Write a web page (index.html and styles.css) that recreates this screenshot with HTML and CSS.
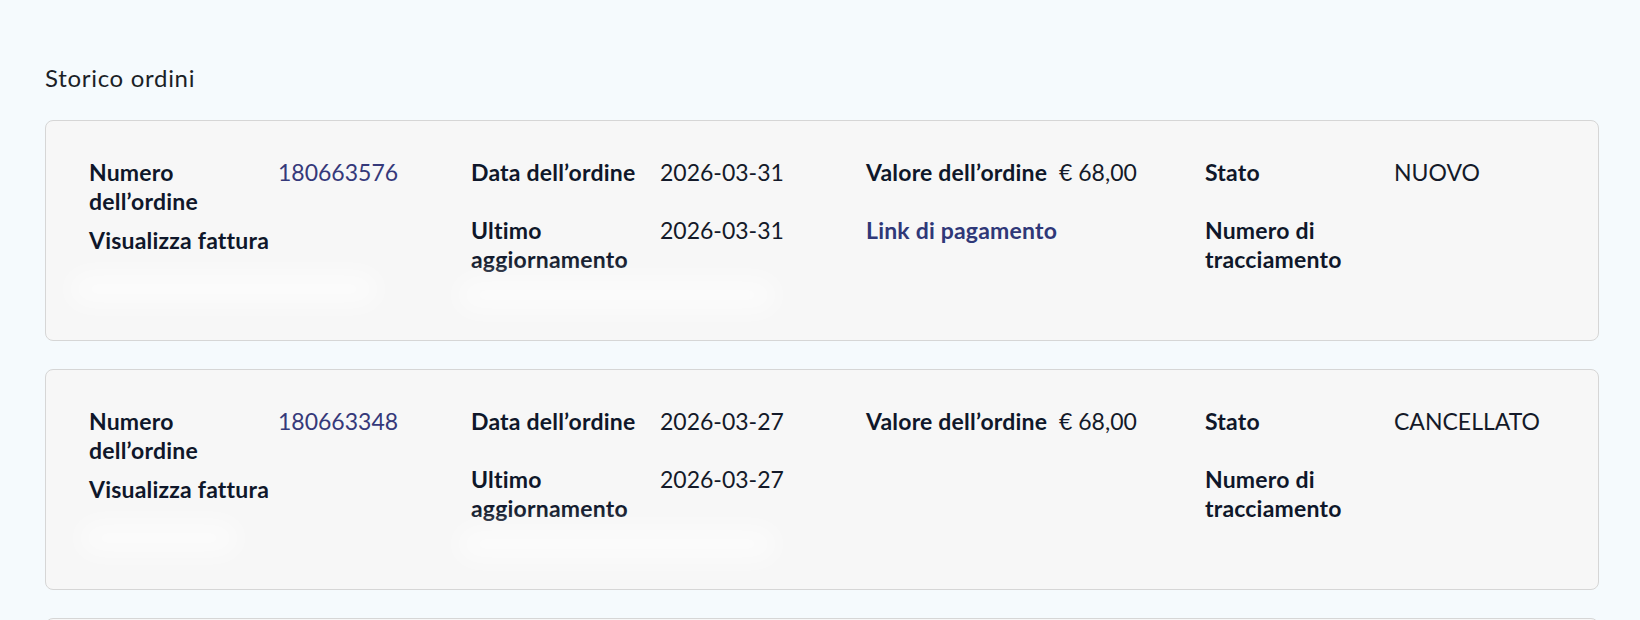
FILE: index.html
```html
<!DOCTYPE html>
<html lang="it">
<head>
<meta charset="utf-8">
<title>Storico ordini</title>
<link rel="stylesheet" href="styles.css">
</head>
<body>
<main class="page">
  <h2 class="title">Storico ordini</h2>

  <section class="card">
    <div class="grid">
      <div class="col">
        <div class="field"><span class="label">Numero dell’ordine</span><a class="value link-num" href="#">180663576</a></div>
        <div class="field"><span class="label label-wide">Visualizza fattura</span></div>
        <div class="smudge smudge-a"></div>
      </div>
      <div class="col">
        <div class="field"><span class="label">Data dell’ordine</span><span class="value">2026-03-31</span></div>
        <div class="field"><span class="label">Ultimo aggiornamento</span><span class="value">2026-03-31</span></div>
        <div class="smudge smudge-b"></div>
      </div>
      <div class="col">
        <div class="field"><span class="label label-nowrap">Valore dell’ordine</span><span class="value">€ 68,00</span></div>
        <div class="field"><a class="paylink" href="#">Link di pagamento</a></div>
      </div>
      <div class="col">
        <div class="field"><span class="label">Stato</span><span class="value">NUOVO</span></div>
        <div class="field"><span class="label">Numero di tracciamento</span></div>
      </div>
    </div>
  </section>

  <section class="card">
    <div class="grid">
      <div class="col">
        <div class="field"><span class="label">Numero dell’ordine</span><a class="value link-num" href="#">180663348</a></div>
        <div class="field"><span class="label label-wide">Visualizza fattura</span></div>
        <div class="smudge smudge-c"></div>
      </div>
      <div class="col">
        <div class="field"><span class="label">Data dell’ordine</span><span class="value">2026-03-27</span></div>
        <div class="field"><span class="label">Ultimo aggiornamento</span><span class="value">2026-03-27</span></div>
        <div class="smudge smudge-b"></div>
      </div>
      <div class="col">
        <div class="field"><span class="label label-nowrap">Valore dell’ordine</span><span class="value">€ 68,00</span></div>
      </div>
      <div class="col">
        <div class="field"><span class="label">Stato</span><span class="value">CANCELLATO</span></div>
        <div class="field"><span class="label">Numero di tracciamento</span></div>
      </div>
    </div>
  </section>

  <section class="card"></section>
</main>
</body>
</html>
```

FILE: styles.css
```css
* { box-sizing: border-box; }

html, body {
  margin: 0;
  padding: 0;
  background: #f5fafd;
}

body {
  font-family: Lato, "Open Sans", "Noto Sans", sans-serif;
  color: #0f172a;
  font-size: 23px;
  line-height: 29px;
}

.page {
  padding: 63px 41px 0 45px;
}

.title {
  margin: 0 0 27px 0;
  font-size: 24px;
  line-height: 30px;
  font-weight: 400;
  letter-spacing: 0.7px;
  color: #1b1f27;
}

.card {
  background: #f7f7f7;
  border: 1px solid #d6d6d6;
  border-radius: 8px;
  padding: 37px 45px 0 43px;
  margin-bottom: 28px;
  min-height: 221px;
  overflow: hidden;
}

.grid {
  display: grid;
  grid-template-columns: 382px 395px 339px 1fr;
}

.col {
  display: flex;
  flex-direction: column;
}

.field {
  display: flex;
  align-items: flex-start;
  gap: 9px;
  min-height: 48px;
  margin-bottom: 10px;
}

.label {
  flex: none;
  width: 180px;
  font-weight: 700;
  letter-spacing: 0.2px;
  color: #0f172a;
}

.label-nowrap {
  width: auto;
  min-width: 184px;
  white-space: nowrap;
}

.label-wide {
  width: auto;
  white-space: nowrap;
}

.value {
  color: #141a29;
}

.link-num {
  color: #35397a;
  text-decoration: none;
}

.paylink {
  color: #2f3878;
  font-weight: 700;
  letter-spacing: 0.2px;
  text-decoration: none;
}

.smudge {
  height: 34px;
  margin-top: -12px;
  border-radius: 18px;
  background: rgba(255, 255, 255, 0.55);
  filter: blur(12px);
}

.smudge-a { width: 310px; margin-left: -20px; }
.smudge-b { width: 320px; margin-left: -14px; margin-top: -6px; }
.smudge-c { width: 160px; margin-left: -10px; }
```
